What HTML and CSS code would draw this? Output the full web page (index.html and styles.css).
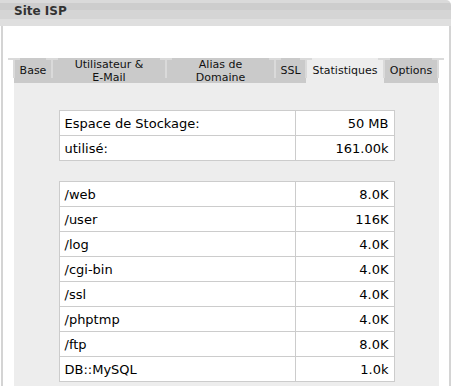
FILE: index.html
```html
<!DOCTYPE html>
<html lang="fr">
<head>
<meta charset="utf-8"/>
<title>Site ISP</title>
<link rel="stylesheet" href="styles.css">
</head>
<body>
<div class="window">
  <div class="window-title">Site ISP</div>
  <div class="window-body">
    <div class="tabs">
      <div class="tab tab-base">Base</div>
      <div class="tab tab-user">Utilisateur &amp;<br>E-Mail</div>
      <div class="tab tab-alias">Alias de<br>Domaine</div>
      <div class="tab tab-ssl">SSL</div>
      <div class="tab tab-stats active">Statistiques</div>
      <div class="tab tab-options last">Options</div>
    </div>
    <div class="panel">
      <table class="stats">
        <tr><td>Espace de Stockage:</td><td class="num">50 MB</td></tr>
        <tr><td>utilisé:</td><td class="num">161.00k</td></tr>
      </table>
      <table class="stats">
        <tr><td>/web</td><td class="num">8.0K</td></tr>
        <tr><td>/user</td><td class="num">116K</td></tr>
        <tr><td>/log</td><td class="num">4.0K</td></tr>
        <tr><td>/cgi-bin</td><td class="num">4.0K</td></tr>
        <tr><td>/ssl</td><td class="num">4.0K</td></tr>
        <tr><td>/phptmp</td><td class="num">4.0K</td></tr>
        <tr><td>/ftp</td><td class="num">8.0K</td></tr>
        <tr><td>DB::MySQL</td><td class="num">1.0k</td></tr>
      </table>
    </div>
  </div>
</div>
</body>
</html>
```

FILE: styles.css
```css
body {
  margin: 0;
  background: white;
  font-family: "DejaVu Sans", Verdana, sans-serif;
  color: #000;
}
.window {
  width: 451px;
}
.window-title {
  height: 26px;
  box-sizing: border-box;
  padding: 4px 0 0 14px;
  font-size: 12px;
  font-weight: bold;
  color: #333;
  border-top-right-radius: 5px;
  background: linear-gradient(#dadada 0, #dadada 3px, #cdcdcd 3px, #cdcdcd 10px, #d5d5d5 10px, #d5d5d5 19px, #dfdfdf 19px);
}
.window-body {
  margin-left: 1px;
  border-left: 2px solid #d4d4d4;
  border-right: 2px solid #d4d4d4;
  padding: 32px 10px 0 11px;
}
.tabs {
  display: flex;
  width: 424px;
  height: 25px;
  background: #cacaca;
  font-size: 11px;
  color: #111;
}
.tab {
  position: relative;
  display: flex;
  align-items: center;
  justify-content: center;
  text-align: center;
  line-height: 13px;
}
/* the little light "T" between tabs */
.tab::before,
.tab.last::after {
  content: "";
  position: absolute;
  top: 0;
  left: -6px;
  width: 12px;
  height: 20px;
  background:
    linear-gradient(#dadada, #dadada) center top / 12px 2px no-repeat,
    linear-gradient(#dadada, #dadada) center top / 2px 20px no-repeat;
}
.tab.last::after {
  left: auto;
  right: -6px;
}
.tab-base { width: 38px; }
.tab-user { width: 114px; }
.tab-alias { width: 109px; }
.tab-ssl { width: 31px; }
.tab-stats { width: 78px; }
.tab-options { width: 54px; }
.tab.active {
  background: #ededed;
}
.panel {
  width: 425px;
  background: #ededed;
  padding: 27px 0 5px;
}
.stats {
  width: 336px;
  margin: 0 auto 20px;
  border-collapse: collapse;
  font-size: 13px;
  background: white;
}
.stats:last-child {
  margin-bottom: 0;
}
.stats td {
  border: 1px solid #cccccc;
  height: 24px;
  padding: 0 5px;
}
.stats td.num {
  width: 88px;
  text-align: right;
}
```
